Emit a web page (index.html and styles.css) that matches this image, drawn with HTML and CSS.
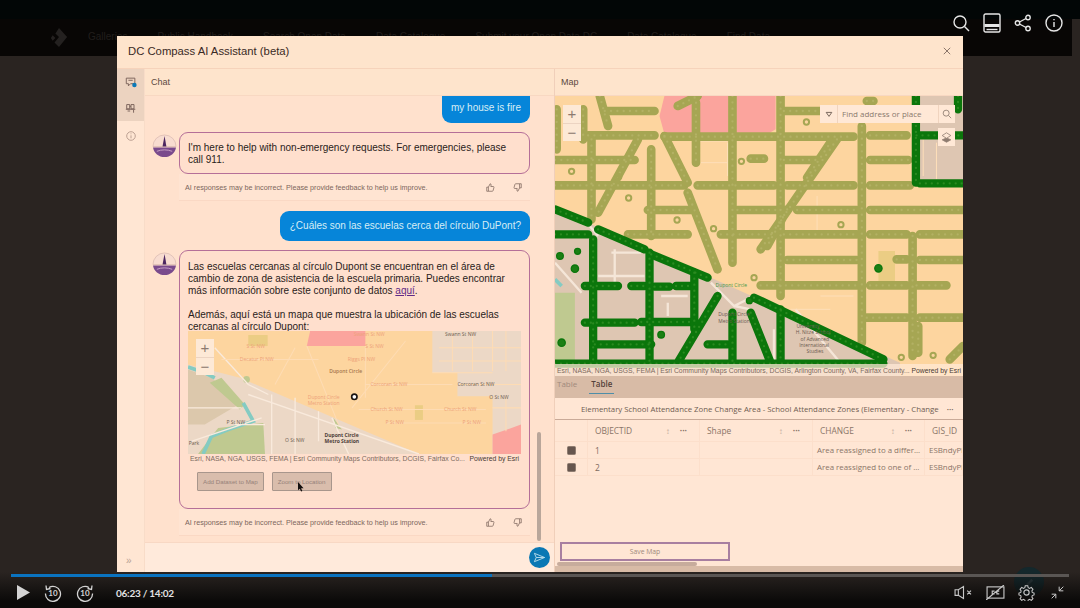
FILE: index.html
```html
<!DOCTYPE html>
<html lang="en">
<head>
    <meta charset="UTF-8">
    <title>DC Compass AI Assistant</title>
    <link rel="stylesheet" href="styles.css">
</head>
<body>
    <!-- Page behind the dialog -->
    <div class="top-strip"></div>
    <div class="navbar">
        <svg class="nav-logo" viewBox="0 0 20 24"><path d="M10 1 19 11 10 22 5 17 10 11 6 7Z M3 9 6 12 3 15 1 12Z"/></svg>
        <span>Galleries</span>
        <span>Public Handbook</span>
        <span>Search Open Data</span>
        <span>Data Catalogue</span>
        <span>Submit your Open Data DC</span>
        <span>Data Catalogue</span>
        <span>Find Data</span>
    </div>

    <!-- Dialog -->
    <div class="modal">
        <div class="modal-header">
            <span class="modal-title">DC Compass AI Assistant (beta)</span>
            <svg class="modal-close" viewBox="0 0 10 10"><path d="M1 1 9 9M9 1 1 9"/></svg>
        </div>
        <div class="modal-body">
            <div class="rail">
                <div class="rail-active">
                    <div class="rail-btn">
                        <svg class="rail-icon" viewBox="0 0 14 14"><path d="M1.500 2.500h10v6.500h-5l-2.500 2.500v-2.500h-2.500z M4 5h5"/><circle class="rail-dot" cx="11" cy="10.500" r="2.600"/></svg>
                    </div>
                    <div class="rail-btn">
                        <svg class="rail-icon" viewBox="0 0 14 14"><path d="M2 3h3.500v5h-3.500z M7 3h3.500v5h-3.500z M5.500 5h1.500 M1 8.500h11 M3 10.500h3 M10 9v3.500"/></svg>
                    </div>
                </div>
                <div class="rail-btn rail-info">
                    <svg class="rail-icon" viewBox="0 0 14 14"><circle cx="7" cy="7" r="5"/><path d="M7 6.200v3.500M7 4v1"/></svg>
                </div>
                <div class="rail-expand">&raquo;</div>
            </div>

            <div class="chat-pane">
                <div class="pane-title">Chat</div>
                <div class="chat-scroll">
                    <div class="bubble bubble-first">my house is fire</div>

                    <div class="answer">
                        <svg class="avatar" viewBox="0 0 26 26">
                            <path class="avatar-top" d="M1 13a12 12 0 0 1 24 0z"/>
                            <path class="avatar-spire" d="M11 13 13 2 15 13z"/>
                            <path class="avatar-base" d="M1 14h24c-1 6-6 10-12 10S2 20 1 14z"/>
                            <path class="avatar-band" d="M5 18c5-2 11-2 16 0"/>
                        </svg>
                        <div class="answer-col">
                            <div class="answer-box">I'm here to help with non-emergency requests. For emergencies, please call 911.</div>
                            <div class="feedback">
                                <span>AI responses may be incorrect. Please provide feedback to help us improve.</span>
                                <div class="thumbs">
                                    <svg class="thumb" viewBox="0 0 12 12"><path d="M1 5.500h2.200v5.500h-2.200z M3.200 5.500 5.500 1c1 0 1.500.7 1.300 1.700l-.4 2h3.400c.6 0 1 .6.8 1.200l-1.100 4.100c-.1.400-.4 1-1 1h-5.300"/></svg>
                                    <svg class="thumb" viewBox="0 0 12 12"><path d="M11 6.500h-2.200v-5.500h2.200z M8.800 6.500 6.500 11c-1 0-1.500-.7-1.300-1.700l.4-2h-3.400c-.6 0-1-.6-.8-1.200l1.100-4.100c.1-.4.4-1 1-1h5.300"/></svg>
                                </div>
                            </div>
                        </div>
                    </div>

                    <div class="bubble">¿Cuáles son las escuelas cerca del círculo DuPont?</div>

                    <div class="answer">
                        <svg class="avatar" viewBox="0 0 26 26">
                            <path class="avatar-top" d="M1 13a12 12 0 0 1 24 0z"/>
                            <path class="avatar-spire" d="M11 13 13 2 15 13z"/>
                            <path class="avatar-base" d="M1 14h24c-1 6-6 10-12 10S2 20 1 14z"/>
                            <path class="avatar-band" d="M5 18c5-2 11-2 16 0"/>
                        </svg>
                        <div class="answer-col">
                            <div class="answer-box answer-long">
                                <p>Las escuelas cercanas al círculo Dupont se encuentran en el área de cambio de zona de asistencia de la escuela primaria. Puedes encontrar más información sobre este conjunto de datos <a href="#">aquí</a>.</p>
                                <p>Además, aquí está un mapa que muestra la ubicación de las escuelas cercanas al círculo Dupont:</p>
                                <div class="mini-map">
                                    <svg class="mini-svg" viewBox="10 10 995 368" preserveAspectRatio="none">
                                        <rect class="m-gray" x="10" y="10" width="995" height="368"/>
                                        <path class="m-tan" d="M10 125 80 150 170 225 60 290 10 290Z"/>
                                        <path class="m-orange" d="M10 10V110L165 150 700 378H920V205H815V135H740V10Z"/>
                                        <path class="m-pink" d="M375 10H540V55H365Z"/>
                                        <path class="m-pink" d="M920 320 1005 290V378H920Z"/>
                                        <path class="m-park" d="M40 378 100 300 235 285 240 378Z"/>
                                        <path class="m-park" d="M75 165 110 150 180 230 165 245Z"/>
                                        <path class="m-park" d="M445 270 470 305 450 300Z"/>
                                        <circle class="m-park" cx="185" cy="155" r="10"/>
                                        <path class="m-yellow" d="M190 22H248V55H190Z"/>
                                        <path class="m-yellow" d="M688 232H712V276H688Z"/>
                                        <path class="m-river" d="M10 118 60 135 90 150"/>
                                        <path class="m-river" d="M175 225 205 280 130 305 80 325 55 378"/>
                                        <path class="m-road" d="M90 60 190 170 250 200M10 240H170M150 290H240M260 200V378M190 200 700 378M330 210V378M400 250V340M440 270 490 378M20 340 230 270"/>
                                        <path class="m-lane" d="M365 55 460 290M660 40 500 240M330 60 270 170M540 55V210M110 95H400M740 135H920M760 60H1005M760 100H1005M800 10V130M860 10V130M920 10V130M960 10V130M820 170H1005M920 240H1005M960 210V310M540 170H800M520 245H900M600 285H900"/>
                                        <text class="m-label m-peach" x="185" y="62">S St NW</text>
                                        <text class="m-label m-peach" x="165" y="99">Decatur Pl NW</text>
                                        <text class="m-label m-peach" x="505" y="24">Swann St NW</text>
                                        <text class="m-label m-peach" x="540" y="62">S St NW</text>
                                        <text class="m-label m-peach" x="487" y="99">Riggs Pl NW</text>
                                        <text class="m-label m-brown" x="432" y="137">Dupont Circle</text>
                                        <text class="m-label m-peach" x="555" y="175">Corcoran St NW</text>
                                        <text class="m-label m-peach" x="368" y="212">Dupont Circle</text>
                                        <text class="m-label m-peach" x="368" y="231">Metro Station</text>
                                        <text class="m-label m-peach" x="555" y="249">Church St NW</text>
                                        <text class="m-label m-peach" x="775" y="249">Church St NW</text>
                                        <text class="m-label m-peach" x="600" y="287">P St NW</text>
                                        <text class="m-label m-peach" x="830" y="287">P St NW</text>
                                        <text class="m-label m-dark" x="778" y="24">Swann St NW</text>
                                        <text class="m-label m-dark" x="815" y="175">Corcoran St NW</text>
                                        <text class="m-label m-dark" x="910" y="212">O St NW</text>
                                        <text class="m-label m-dark" x="125" y="287">P St NW</text>
                                        <text class="m-label m-dark" x="300" y="341">O St NW</text>
                                        <text class="m-label m-bold" x="418" y="326">Dupont Circle</text>
                                        <text class="m-label m-bold" x="418" y="345">Metro Station</text>
                                        <text class="m-label m-dark" x="12" y="352">Park</text>
                                        <circle class="m-marker" cx="507" cy="207" r="8"/>
                                    </svg>
                                    <div class="zoom-ctl zoom-mini"><span>+</span><span>&minus;</span></div>
                                </div>
                                <div class="mini-attr">
                                    <span>Esri, NASA, NGA, USGS, FEMA | Esri Community Maps Contributors, DCGIS, Fairfax Co...</span>
                                    <span class="attr-power">Powered by Esri</span>
                                </div>
                                <div class="answer-actions">
                                    <button class="btn-grey">Add Dataset to Map</button>
                                    <button class="btn-grey btn-zoom">Zoom to Location<svg class="cursor" viewBox="0 0 8 12"><path d="M1 0v10l2.200-2 1.500 3.500 1.500-.7-1.500-3.300h3z"/></svg></button>
                                </div>
                            </div>
                            <div class="feedback">
                                <span>AI responses may be incorrect. Please provide feedback to help us improve.</span>
                                <div class="thumbs">
                                    <svg class="thumb" viewBox="0 0 12 12"><path d="M1 5.500h2.200v5.500h-2.200z M3.200 5.500 5.500 1c1 0 1.500.7 1.300 1.700l-.4 2h3.400c.6 0 1 .6.8 1.200l-1.100 4.100c-.1.400-.4 1-1 1h-5.300"/></svg>
                                    <svg class="thumb" viewBox="0 0 12 12"><path d="M11 6.500h-2.200v-5.500h2.200z M8.800 6.500 6.500 11c-1 0-1.500-.7-1.300-1.700l.4-2h-3.400c-.6 0-1-.6-.8-1.200l1.100-4.100c.1-.4.4-1 1-1h5.300"/></svg>
                                </div>
                            </div>
                        </div>
                    </div>
                    <div class="chat-scrollbar"></div>
                </div>
                <div class="chat-input">
                    <div class="send-btn">
                        <svg viewBox="0 0 14 14"><path d="M1.500 2.500 12.500 7 1.500 11.500 3.500 7zM3.500 7h9"/></svg>
                    </div>
                </div>
            </div>

            <div class="map-pane">
                <div class="pane-title">Map</div>
                <div class="map-view">
                    <svg class="map-svg" viewBox="0 0 1230 840" preserveAspectRatio="none">
                        <defs>
                            <g id="olive-streets">
                                <path d="M150 45H300M690 45H800M940 15H960M100 118H300M330 122H900M950 118H1060"/>
                                <path d="M0 192H240M590 188H630M690 192H800M950 192H1065M0 268H390M430 268H660M700 268H900M950 268H1070"/>
                                <path d="M280 342H410M550 342H670M730 342H910M950 342H1230M220 415H400M500 415H660M690 415H910M950 415H1060M1100 415H1230"/>
                                <path d="M700 492H910M1030 490H1060M1100 492H1230M620 568H920M950 568H1060M1090 568H1180M940 665H1060M1100 665H1230"/>
                                <path d="M5 40V160M85 40V130M110 130V370M290 160V420M425 20V200M535 0V500M680 0V600M925 90V740M1078 420V780M1095 690V770"/>
                                <path d="M135 0 160 90M330 120 400 260M250 130 130 350M400 290 490 520M850 130 620 460M760 245 830 140M700 340 640 450M370 30 430 0"/>
                                <path d="M1190 790 1230 750"/>
                            </g>
                            <g id="green-streets">
                                <path d="M0 340 100 380M130 400 270 460M290 475 460 545M600 605 990 790M0 415H100"/>
                                <path d="M90 570H190M230 570H270M300 572H345M365 570H410M90 680H240M260 678H420M120 745H290M460 745H520"/>
                                <path d="M115 430V800M285 470V800M420 530V700M535 650V800M680 640V800M490 600 370 800M590 650 650 800M0 803H990"/>
                                <path d="M1088 0V260M1090 118H1230M1100 262H1230M1215 0V40"/>
                            </g>
                        </defs>
                        <rect class="m-orange" width="1230" height="840"/>
                        <path class="m-gray-big" d="M0 335 1040 800V840H0Z"/>
                        <path class="m-gray-big" d="M1090 0H1230V262H1090Z"/>
                        <path class="m-pink" d="M330 0H665V100L640 115H330L315 60Z"/>
                        <path class="m-yellow" d="M975 465H1025V555H975Z"/>
                        <path class="m-park" d="M0 590H60V800H0Z"/>
                        <path class="m-river" d="M0 550 20 570"/>
                        <path class="m-road-big" d="M100 385 130 420M0 500 80 590M470 560 540 630 600 600M540 630 590 640M170 470H260M340 620V660M130 540H270M180 460V560M320 600H400M660 700V800M725 640 860 800"/>
                        <path class="m-lane-big" d="M430 135H520M520 140V240M440 200H520M790 300V410M800 600H900M710 640H830M1110 130V240M1150 140V250"/>
                        <use href="#olive-streets" class="st-olive"/>
                        <use href="#olive-streets" class="st-olive-dots"/>
                        <circle class="dot-olive" cx="758" cy="78" r="8"/><circle class="dot-olive" cx="50" cy="226" r="8"/>
                        <circle class="dot-olive" cx="192" cy="242" r="8"/><circle class="dot-olive" cx="222" cy="306" r="8"/>
                        <circle class="dot-olive" cx="368" cy="372" r="8"/><circle class="dot-olive" cx="562" cy="196" r="8"/>
                        <circle class="dot-olive" cx="862" cy="386" r="8"/><circle class="dot-olive" cx="1140" cy="778" r="8"/>
                        <circle class="dot-olive" cx="1044" cy="784" r="8"/><circle class="dot-olive" cx="490" cy="520" r="8"/>
                        <circle class="dot-olive" cx="600" cy="545" r="8"/><circle class="dot-olive" cx="478" cy="398" r="8"/>
                        <use href="#green-streets" class="st-green"/>
                        <use href="#green-streets" class="st-green-dots"/>
                        <circle class="dot-green" cx="15" cy="480" r="10"/><circle class="dot-green" cx="68" cy="466" r="9"/>
                        <circle class="dot-green" cx="60" cy="518" r="11"/><circle class="dot-green" cx="320" cy="716" r="10"/>
                        <circle class="dot-green" cx="20" cy="740" r="11"/><circle class="dot-green" cx="975" cy="517" r="11"/>
                        <circle class="dot-green" cx="586" cy="614" r="9"/>
                        <text class="big-label big-green" x="484" y="573">Dupont Circle</text>
                        <text class="big-label" x="492" y="660">Dupont Circle</text>
                        <text class="big-label" x="492" y="680">Metro Station</text>
                        <text class="big-label" x="728" y="695">University</text>
                        <text class="big-label" x="726" y="715">H. Nitze School</text>
                        <text class="big-label" x="740" y="735">of Advanced</text>
                        <text class="big-label" x="736" y="752">International</text>
                        <text class="big-label" x="758" y="772">Studies</text>
                    </svg>
                    <div class="zoom-ctl zoom-main"><span>+</span><span>&minus;</span></div>
                    <div class="map-search">
                        <div class="search-drop"><svg viewBox="0 0 10 10"><path d="M1.500 3h7L5 8z"/></svg></div>
                        <div class="search-text">Find address or place</div>
                        <div class="search-go"><svg viewBox="0 0 12 12"><circle cx="5" cy="5" r="3.600"/><path d="M7.800 7.800 11 11"/></svg></div>
                    </div>
                    <div class="map-layers">
                        <svg viewBox="0 0 14 14"><path class="layer-fill" d="M7 7.500 1.500 10 7 13 12.500 10z"/><path d="M7 1 1.500 4.500 7 8 12.500 4.500z"/></svg>
                    </div>
                    <div class="map-attr">
                        <span>Esri, NASA, NGA, USGS, FEMA | Esri Community Maps Contributors, DCGIS, Arlington County, VA, Fairfax County...</span>
                        <span class="attr-power">Powered by Esri</span>
                    </div>
                </div>

                <div class="table-panel">
                    <div class="table-tabs">
                        <span class="tab">Table</span>
                        <span class="tab tab-active">Table</span>
                    </div>
                    <div class="table-title">
                        <span>Elementary School Attendance Zone Change Area - School Attendance Zones (Elementary - Change</span>
                        <span class="dots">&middot;&middot;&middot;</span>
                    </div>
                    <div class="grid-head">
                        <div class="cell"></div>
                        <div class="cell cell-head">OBJECTID<span class="sort">&#8597;</span><span class="dots">&middot;&middot;&middot;</span></div>
                        <div class="cell cell-head">Shape<span class="sort">&#8597;</span><span class="dots">&middot;&middot;&middot;</span></div>
                        <div class="cell cell-head">CHANGE<span class="sort">&#8597;</span><span class="dots">&middot;&middot;&middot;</span></div>
                        <div class="cell cell-head">GIS_ID</div>
                    </div>
                    <div class="grid-row">
                        <div class="cell cell-check"><span class="check"></span></div>
                        <div class="cell">1</div>
                        <div class="cell"></div>
                        <div class="cell cell-tight">Area reassigned to a differ...</div>
                        <div class="cell cell-tight">ESBndyPl</div>
                    </div>
                    <div class="grid-row">
                        <div class="cell cell-check"><span class="check"></span></div>
                        <div class="cell">2</div>
                        <div class="cell"></div>
                        <div class="cell cell-tight">Area reassigned to one of ...</div>
                        <div class="cell cell-tight">ESBndyPl</div>
                    </div>
                    <div class="table-space"></div>
                    <div class="save-row"><button class="save-btn">Save Map</button></div>
                    <div class="hscroll"><div class="hscroll-thumb"></div></div>
                </div>
            </div>
        </div>
    </div>

    <!-- Video player chrome -->
    <div class="player-top">
        <svg class="ptop-icon" viewBox="0 0 18 18"><circle cx="8" cy="8" r="6"/><path d="M12.500 12.500 17 17"/></svg>
        <svg class="ptop-icon ptop-panel" viewBox="0 0 18 20"><rect x="1" y="1" width="16" height="18" rx="1.500"/><path class="panel-fill" d="M1.500 11h15v3h-15z"/><path d="M3.500 16.500h11"/></svg>
        <svg class="ptop-icon" viewBox="0 0 18 18"><circle cx="3.500" cy="9" r="2.200"/><circle cx="14" cy="3.500" r="2.200"/><circle cx="14" cy="14.500" r="2.200"/><path d="M5.500 8 12 4.500M5.500 10 12 13.500"/></svg>
        <svg class="ptop-icon" viewBox="0 0 18 18"><circle cx="9" cy="9" r="8"/><path d="M9 8v5M9 5v1.200"/></svg>
    </div>

    <div class="help-fab">
        <svg viewBox="0 0 14 14"><path d="M3 11 4 8 9 3 11 5 6 10z"/></svg>
    </div>

    <div class="player-bar">
        <div class="progress"><div class="progress-done"></div></div>
        <div class="controls">
            <div class="controls-left">
                <svg class="play" viewBox="0 0 14 16"><path d="M0 0 14 8 0 16z"/></svg>
                <div class="seek">
                    <svg viewBox="0 0 18 18"><path d="M5 3.500A7.500 7.500 0 1 1 1.500 9.500M2 1.500 2.500 5.500 6.500 4.500"/></svg>
                    <span>10</span>
                </div>
                <div class="seek">
                    <svg viewBox="0 0 18 18"><path d="M13 3.500A7.500 7.500 0 1 0 16.500 9.500M16 1.500 15.500 5.500 11.500 4.500"/></svg>
                    <span>10</span>
                </div>
                <span class="time">06:23 / 14:02</span>
            </div>
            <div class="controls-right">
                <svg class="ctl-icon" viewBox="0 0 20 16"><path d="M1 5h3.500L10 1.500v13L4.500 11H1zM4.500 5v6M14 6l4 4M18 6l-4 4"/></svg>
                <svg class="ctl-icon" viewBox="0 0 20 16"><rect x="1" y="2" width="18" height="12"/><path d="M9 6.500H6.500v3H9M14 6.500h-2.500v3H14M0 16 19 0"/></svg>
                <svg class="ctl-icon ctl-gear" viewBox="0 0 18 18"><circle cx="9" cy="9" r="2.800"/><path d="M7.500 1h3l.5 2.300 1.700.8 2-1.200 2 2.300-1.300 1.900.4 1.800 2.200.8v2.200l-2.200.8-.4 1.800 1.300 1.900-2 2-2-1.200-1.700.8-.5 2.300h-3l-.5-2.300-1.700-.8-2 1.200-2-2 1.300-1.900-.4-1.800-2.200-.8v-2.200l2.200-.8.4-1.800-1.300-1.900 2-2.300 2 1.200 1.700-.8z" transform="translate(1 1) scale(.89)"/></svg>
                <svg class="ctl-icon" viewBox="0 0 18 18"><path d="M11 2v5h5M11 7 16 2M7 16v-5H2M7 11 2 16"/></svg>
            </div>
        </div>
    </div>
</body>
</html>
```

FILE: styles.css
```css
* {
    box-sizing: border-box;
}

body {
    margin: 0;
    height: 608px;
    overflow: hidden;
    position: relative;
    background: #2a2421;
    font-family: "Liberation Sans", Arial, sans-serif;
    color: #2e211d;
}

p {
    margin: 0 0 12px;
}

button {
    font-family: inherit;
    cursor: pointer;
}

/* page behind the dialog */
.top-strip {
    height: 19px;
    background: #020606;
}

.navbar {
    height: 37px;
    width: 1072px;
    background: #080605;
    display: flex;
    align-items: center;
    gap: 30px;
    padding: 0 0 2px 50px;
    font-size: 10px;
    color: #211e1c;
    white-space: nowrap;
    overflow: hidden;
}

.nav-logo {
    width: 18px;
    height: 22px;
    margin: 2px -10px 0 0;
    fill: #242120;
}

/* dialog */
.modal {
    position: absolute;
    left: 117px;
    top: 36px;
    width: 846px;
    height: 536px;
    background: #fee4cc;
    display: flex;
    flex-direction: column;
}

.modal-header {
    height: 33px;
    flex: none;
    border-bottom: 1px solid #f6d3bb;
    display: flex;
    align-items: center;
    justify-content: space-between;
    padding: 0 12px 2px 11px;
}

.modal-title {
    font-size: 11.300px;
    color: #3a2a25;
}

.modal-close {
    width: 8px;
    height: 8px;
    fill: none;
    stroke: #6e5a52;
    stroke-width: 1;
}

.modal-body {
    flex: 1;
    display: flex;
    min-height: 0;
}

.rail {
    width: 28px;
    flex: none;
    position: relative;
    background: #ffe6d3;
    border-right: 1px solid #f8dcc8;
}

.rail-active {
    background: #ecd3c0;
}

.rail-btn {
    height: 26px;
    display: flex;
    align-items: center;
    justify-content: center;
}

.rail-info {
    margin-top: 2px;
}

.rail-info .rail-icon {
    stroke: #b89c8e;
}

.rail-icon {
    width: 12px;
    height: 12px;
    fill: none;
    stroke: #7a625a;
    stroke-width: 1.100;
}

.rail-dot {
    fill: #0a79b8;
    stroke: none;
}

.rail-expand {
    position: absolute;
    left: 9px;
    bottom: 6px;
    font-size: 10px;
    color: #b8a294;
}

.chat-pane {
    width: 409px;
    flex: none;
    display: flex;
    flex-direction: column;
    background: #ffe1cd;
}

.pane-title {
    height: 27px;
    flex: none;
    padding: 8px 6px 0 6px;
    font-size: 9px;
    color: #5c4840;
    background: #fee4cc;
    border-bottom: 1px solid #f8d8c2;
}

.map-pane .pane-title {
    padding-left: 6px;
}

.chat-scroll {
    flex: 1;
    position: relative;
    padding: 0 24px 0 7px;
    overflow: hidden;
    min-height: 0;
}

.bubble {
    margin: 10px 0 9px auto;
    width: fit-content;
    background: #0685d9;
    color: #d6edf5;
    font-size: 10px;
    line-height: 12px;
    padding: 9px 9px 9px 10px;
    border-radius: 9px;
}

.bubble-first {
    margin-top: 0;
    border-radius: 0 0 9px 9px;
    padding: 6px 9px 9px;
}

.answer {
    display: flex;
    gap: 2px;
}

.avatar {
    width: 25px;
    height: 25px;
    flex: none;
    margin-top: 2px;
}

.avatar-top {
    fill: #f8dcd0;
    stroke: #c8a8a0;
    stroke-width: .5;
}

.avatar-spire {
    fill: #4c2660;
}

.avatar-base {
    fill: #7a4a8c;
}

.avatar-band {
    fill: none;
    stroke: #c7a0c4;
    stroke-width: 1;
}

.answer-col {
    width: 351px;
}

.answer-box {
    border: 1.500px solid #b56f98;
    border-radius: 9px;
    background: #ffdfcd;
    font-size: 10px;
    line-height: 12px;
    color: #2a1c1a;
    padding: 9px 8px 7px;
}

.answer-long {
    height: 259px;
    padding-top: 10px;
}

.answer-long a {
    color: #5f2a86;
}

.feedback {
    height: 27px;
    display: flex;
    align-items: center;
    justify-content: space-between;
    padding: 0 8px 0 6px;
    font-size: 7.200px;
    color: #7c665c;
    border-bottom: 1px solid #fad8c4;
    background: #ffe4d2;
}

.thumbs {
    display: flex;
    gap: 18px;
}

.thumb {
    width: 9px;
    height: 9px;
    fill: none;
    stroke: #7c665c;
    stroke-width: 1;
}

.mini-map {
    position: relative;
    height: 123px;
    margin: -14px 0 0 0;
    overflow: hidden;
}

.mini-svg {
    display: block;
    width: 100%;
    height: 100%;
}

.m-gray {
    fill: #ecd8c6;
}

.m-gray-big {
    fill: #dec6b2;
}

.m-orange {
    fill: #fdd59f;
}

.m-pink {
    fill: #fba49d;
}

.m-park {
    fill: #bfc990;
}

.m-tan {
    fill: #dcc8ac;
}

.m-yellow {
    fill: #ebcd84;
}

.m-river {
    fill: none;
    stroke: #84cbc2;
    stroke-width: 11;
}

.m-road {
    fill: none;
    stroke: #f9eadc;
    stroke-width: 4;
}

.m-lane {
    fill: none;
    stroke: #fedcb4;
    stroke-width: 3;
}

.m-road-big {
    fill: none;
    stroke: #f5e6d8;
    stroke-width: 7;
}

.m-lane-big {
    fill: none;
    stroke: #fedfb9;
    stroke-width: 3;
}

.m-label {
    font-size: 15px;
    font-family: "Open Sans", sans-serif;
}

.m-peach {
    fill: #eda27a;
}

.m-brown {
    fill: #a5764e;
    font-weight: 600;
}

.m-dark {
    fill: #6c5c50;
}

.m-bold {
    fill: #4e4038;
    font-weight: 700;
}

.m-marker {
    fill: #fff;
    stroke: #1b1512;
    stroke-width: 5;
}

.mini-attr {
    display: flex;
    justify-content: space-between;
    font-size: 6.800px;
    line-height: 9px;
    color: #7c6a60;
    padding: 0 2px;
    white-space: nowrap;
}

.attr-power {
    color: #4a3b34;
}

.answer-actions {
    display: flex;
    gap: 8px;
    padding: 9px 0 0 9px;
}

.btn-grey {
    height: 19px;
    padding: 0 5px;
    position: relative;
    font-size: 6.200px;
    color: #96827a;
    background: #d9bdac;
    border: 1px solid #a8968c;
    border-radius: 1px;
}

.cursor {
    position: absolute;
    left: 24px;
    top: 9px;
    width: 7px;
    height: 10px;
    fill: #15100e;
}

.chat-scrollbar {
    position: absolute;
    right: 13px;
    top: 336px;
    width: 4px;
    height: 109px;
    border-radius: 2px;
    background: #b9a69a;
}

.chat-input {
    height: 30px;
    flex: none;
    background: #ffeadb;
    border-top: 1px solid #f8d8c4;
    display: flex;
    align-items: center;
    justify-content: flex-end;
    padding-right: 4px;
}

.send-btn {
    width: 21px;
    height: 21px;
    border-radius: 50%;
    background: #0a78b4;
    display: flex;
    align-items: center;
    justify-content: center;
}

.send-btn svg {
    width: 13px;
    height: 13px;
    fill: none;
    stroke: #b9dcea;
    stroke-width: 1;
}

/* map side */
.map-pane {
    flex: 1;
    min-width: 0;
    display: flex;
    flex-direction: column;
    border-left: 1px solid #f0cfba;
}

.map-view {
    height: 280px;
    flex: none;
    position: relative;
    overflow: hidden;
}

.map-svg {
    display: block;
    width: 100%;
    height: 100%;
}

.st-olive {
    fill: none;
    stroke: #a6a653;
    stroke-width: 26;
    stroke-linecap: round;
}

.st-olive-dots {
    fill: none;
    stroke: #b3b164;
    stroke-width: 7;
    stroke-linecap: round;
    stroke-dasharray: 0 19;
}

.st-green {
    fill: none;
    stroke: #0b760b;
    stroke-width: 25;
    stroke-linecap: round;
}

.st-green-dots {
    fill: none;
    stroke: #2a8a20;
    stroke-width: 7;
    stroke-linecap: round;
    stroke-dasharray: 0 18;
}

.dot-olive {
    fill: none;
    stroke: #a6a653;
    stroke-width: 6;
}

.dot-green {
    fill: #1b7f14;
    stroke: #0b760b;
    stroke-width: 4;
}

.big-label {
    font-size: 15px;
    font-family: "Open Sans", sans-serif;
    fill: #6a5a50;
}

.big-green {
    fill: #4a9a4a;
}

.zoom-ctl {
    position: absolute;
    display: flex;
    flex-direction: column;
    background: #fde9d6;
    color: #8c7a70;
    text-align: center;
}

.zoom-ctl span {
    height: 18px;
    line-height: 17px;
    font-size: 15px;
}

.zoom-ctl span + span {
    border-top: 1px solid #ecd4c2;
}

.zoom-main {
    left: 8px;
    top: 9px;
    width: 18px;
}

.zoom-mini {
    left: 8px;
    top: 8px;
    width: 18px;
}

.map-search {
    position: absolute;
    left: 265px;
    top: 9px;
    width: 135px;
    height: 18px;
    display: flex;
    background: #ffe8d6;
    font-family: "Open Sans", sans-serif;
    font-size: 8px;
    color: #8a786c;
}

.search-drop {
    width: 18px;
    display: flex;
    align-items: center;
    justify-content: center;
    border-right: 1px solid #f0d4bf;
}

.search-drop svg {
    width: 8px;
    height: 8px;
    fill: none;
    stroke: #75645a;
    stroke-width: 1.200;
}

.search-text {
    flex: 1;
    line-height: 18px;
    padding-left: 4px;
}

.search-go {
    width: 17px;
    display: flex;
    align-items: center;
    justify-content: center;
    border-left: 1px solid #f0d4bf;
}

.search-go svg {
    width: 10px;
    height: 10px;
    fill: none;
    stroke: #8a786c;
    stroke-width: 1;
}

.map-layers {
    position: absolute;
    left: 383px;
    top: 32px;
    width: 17px;
    height: 18px;
    background: #ffe8d6;
    display: flex;
    align-items: center;
    justify-content: center;
}

.map-layers svg {
    width: 11px;
    height: 11px;
    fill: #ffe8d6;
    stroke: #8f7c70;
    stroke-width: 1;
}

.layer-fill {
    fill: #8f7c70;
}

.map-attr {
    position: absolute;
    left: 0;
    right: 0;
    bottom: 0;
    height: 12px;
    display: flex;
    justify-content: space-between;
    align-items: center;
    padding: 0 2px;
    background: rgba(255, 232, 214, .75);
    font-size: 6.800px;
    color: #7c6a60;
    white-space: nowrap;
    overflow: hidden;
}

.table-panel {
    flex: 1;
    min-height: 0;
    display: flex;
    flex-direction: column;
    background: #ffe6d4;
    font-family: "Open Sans", sans-serif;
    color: #7e6a5e;
}

.table-tabs {
    height: 22px;
    flex: none;
    background: #d8bba6;
    display: flex;
    gap: 12px;
    padding-left: 1px;
    font-size: 8px;
    line-height: 15px;
}

.tab {
    padding: 0 0 0 1px;
    color: #a18a7c;
    height: 18px;
}

.tab-active {
    color: #55423a;
    font-weight: 600;
    border-bottom: 1.500px solid #4e8ea8;
    padding: 0 2px;
}

.table-title {
    height: 22px;
    flex: none;
    display: flex;
    align-items: center;
    font-size: 7.800px;
    padding-left: 26px;
    gap: 8px;
    color: #6f5c52;
    white-space: nowrap;
    overflow: hidden;
    border-bottom: 1px solid #c9aa98;
}

.dots {
    font-weight: 700;
}

.grid-head,
.grid-row {
    display: grid;
    grid-template-columns: 33px 112px 113px 112px 1fr;
    flex: none;
    border-bottom: 1px solid #fcdfcb;
}

.grid-head {
    height: 22px;
}

.grid-row {
    height: 17px;
}

.cell {
    display: flex;
    align-items: center;
    padding-left: 7px;
    font-size: 8.400px;
    border-right: 1px solid #fcdfcb;
    white-space: nowrap;
    overflow: hidden;
}

.cell-head {
    color: #8a7568;
}

.cell-head .sort {
    margin-left: auto;
    font-size: 8px;
    color: #c2ac9c;
}

.cell-head .dots {
    margin: 0 12px 0 10px;
}

.cell-tight {
    padding-left: 4px;
    font-size: 7.900px;
    color: #8a7568;
}

.cell-check {
    padding-left: 12px;
}

.check {
    width: 9px;
    height: 9px;
    background: #66564e;
    border: 1px solid #8f7c70;
    border-radius: 1.500px;
}

.table-space {
    flex: 1;
}

.save-row {
    flex: none;
    padding-left: 5px;
}

.save-btn {
    display: block;
    width: 170px;
    height: 19px;
    background: #ffe6d4;
    border: 2px solid #a87fa0;
    font-size: 6.800px;
    color: #a08a7c;
}

.hscroll {
    height: 11px;
    flex: none;
    padding: 1px 0 0 2px;
    background: linear-gradient(#ffe6d4 5px, #d8bba6 5px);
}

.hscroll-thumb {
    width: 140px;
    height: 4px;
    background: #c7ac9c;
    border-radius: 2px;
}

/* video player */
.player-top {
    position: absolute;
    top: 13px;
    left: 952px;
    width: 111px;
    height: 20px;
    display: flex;
    align-items: center;
    justify-content: space-between;
}

.ptop-icon {
    width: 18px;
    height: 18px;
    fill: none;
    stroke: #e6e6e6;
    stroke-width: 1.400;
}

.ptop-panel {
    height: 20px;
}

.panel-fill {
    fill: #e6e6e6;
    stroke: none;
}

.help-fab {
    position: absolute;
    left: 1014px;
    top: 567px;
    width: 30px;
    height: 30px;
    border-radius: 50%;
    background: #14282c;
    display: flex;
    align-items: center;
    justify-content: center;
}

.help-fab svg {
    width: 13px;
    height: 13px;
    fill: #2a3a3e;
}

.player-bar {
    position: absolute;
    left: 0;
    right: 0;
    bottom: 0;
    height: 36px;
    padding-top: 2px;
    background: linear-gradient(rgba(10, 8, 7, 0), #0b0a09 80%);
}

.progress {
    margin: 0 11px;
    height: 3px;
    background: #5a5654;
}

.progress-done {
    width: 481px;
    height: 3px;
    background: #0a73c0;
}

.controls {
    height: 31px;
    display: flex;
    justify-content: space-between;
    align-items: center;
    padding: 0 13px 0 17px;
}

.controls-left,
.controls-right {
    display: flex;
    align-items: center;
}

.play {
    width: 13px;
    height: 15px;
    fill: #d4d4d4;
    margin-right: 14px;
}

.seek {
    position: relative;
    width: 18px;
    height: 18px;
    margin-right: 14px;
}

.seek svg {
    width: 18px;
    height: 18px;
    fill: none;
    stroke: #d4d4d4;
    stroke-width: 1.300;
    display: block;
}

.seek span {
    position: absolute;
    left: 0;
    right: 0;
    top: 4px;
    text-align: center;
    font-family: Lato, sans-serif;
    font-size: 8px;
    font-weight: 700;
    line-height: 10px;
    color: #d4d4d4;
}

.time {
    margin-left: 8px;
    font-family: Lato, sans-serif;
    font-size: 10px;
    letter-spacing: -.25px;
    font-weight: 700;
    color: #e2e2e2;
}

.controls-right {
    gap: 13px;
}

.ctl-icon {
    width: 19px;
    height: 15px;
    fill: none;
    stroke: #c8c8c8;
    stroke-width: 1.200;
}

.ctl-gear {
    width: 17px;
    height: 17px;
}
```
